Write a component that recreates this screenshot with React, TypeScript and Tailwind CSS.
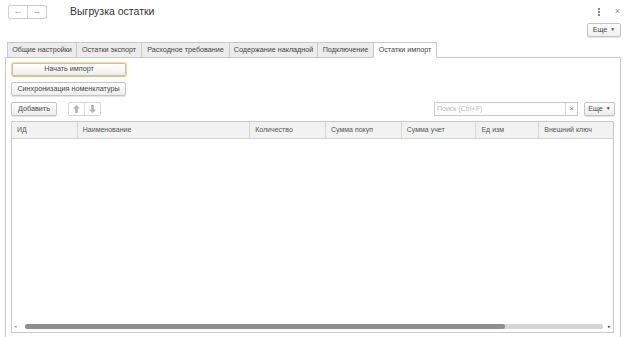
const tabs = [
  { label: "Общие настройки", w: 69 },
  { label: "Остатки экспорт", w: 65 },
  { label: "Расходное требование", w: 88 },
  { label: "Содержание накладной", w: 88 },
  { label: "Подключение", w: 56 },
  { label: "Остатки импорт", w: 64, active: true },
];

const columns = [
  { label: "ИД", w: 66 },
  { label: "Наименование", w: 173 },
  { label: "Количество", w: 76 },
  { label: "Сумма покуп", w: 76 },
  { label: "Сумма учет", w: 75 },
  { label: "Ед изм", w: 63 },
  { label: "Внешний ключ", w: 74 },
];

const Btn = ({ children, className = "" }: { children: React.ReactNode; className?: string }) => (
  <div
    className={
      "flex items-center justify-center whitespace-nowrap rounded-[2px] border border-[#c4c4c4] bg-gradient-to-b from-white to-[#ededed] text-[7.2px] text-[#4a4a4a] shadow-[0_1px_1px_rgba(0,0,0,0.12)] " +
      className
    }
  >
    {children}
  </div>
);

// filled block arrow, like the 1C up/down buttons
const BlockArrow = ({ down = false }: { down?: boolean }) => (
  <svg width="7" height="8" viewBox="0 0 7 8" className={down ? "rotate-180" : ""}>
    <path d="M3.5 0 L7 3.6 H4.8 V8 H2.2 V3.6 H0 Z" fill="#b4b4b4" />
  </svg>
);

export default function App() {
  return (
    <div className="relative h-[337px] w-[627px] overflow-hidden bg-white font-['Liberation_Sans',Arial,sans-serif] text-[#333]">
      {/* header */}
      <div className="flex h-[22px] items-center pl-[8px] pr-[7px] pt-[1px]">
        <div className="flex h-[14px] w-[39px] items-center rounded-[2px] border border-[#cfcfcf] bg-white text-[9px] text-[#9a9a9a]">
          <span className="flex flex-1 justify-center">←</span>
          <span className="h-full w-px bg-[#d8d8d8]" />
          <span className="flex flex-1 justify-center">→</span>
        </div>
        <div className="ml-[23px] whitespace-nowrap text-[10.5px] text-[#333]">Выгрузка остатки</div>
        <div className="ml-auto flex items-center gap-[15px] text-[#8a8a8a]">
          <span className="flex flex-col gap-[1px]">
            <span className="h-[2px] w-[2px] bg-[#8a8a8a]" />
            <span className="h-[2px] w-[2px] bg-[#8a8a8a]" />
            <span className="h-[2px] w-[2px] bg-[#8a8a8a]" />
          </span>
          <span className="text-[9px] leading-none">×</span>
        </div>
      </div>
      <div className="flex justify-end pr-[6px] pt-[1px]">
        <Btn className="h-[14px] w-[34px] gap-[3px]">
          Еще <span className="text-[5px]">▼</span>
        </Btn>
      </div>

      {/* tabs */}
      <div className="mt-[5px] flex pl-[7px]">
        {tabs.map((t) => (
          <div
            key={t.label}
            style={{ width: t.w }}
            className={
              "flex h-[16px] items-center justify-center whitespace-nowrap border border-r-0 border-[#c9c9c9] text-[7.2px] text-[#444] last:border-r " +
              (t.active ? "border-b-white bg-white" : "bg-[#ececec]")
            }
          >
            {t.label}
          </div>
        ))}
      </div>
      <div className="-mt-px ml-[5px] mr-[6px] h-[300px] border border-[#c9c9c9] px-[5px] pt-[4px]">
        <div className="flex flex-col gap-[5px]">
          <div className="w-fit rounded-[2px] border border-[#f7dc74] p-0">
            <Btn className="h-[13px] w-[114px]">Начать импорт</Btn>
          </div>
          <Btn className="h-[14px] w-[115px]">Синхронизация номенклатуры</Btn>
        </div>

        <div className="mt-[6px] flex items-center">
          <Btn className="h-[14px] w-[46px]">Добавить</Btn>
          <div className="ml-[11px] flex h-[14px] w-[33px] items-center rounded-[2px] border border-[#d6d6d6]">
            <span className="flex flex-1 justify-center">
              <BlockArrow />
            </span>
            <span className="h-full w-px bg-[#e0e0e0]" />
            <span className="flex flex-1 justify-center">
              <BlockArrow down />
            </span>
          </div>
          <div className="ml-auto flex h-[14px] w-[144px] items-center border border-[#c9c9c9] bg-white">
            <span className="flex-1 whitespace-nowrap pl-[2px] text-[7px] text-[#b8b8b8]">Поиск (Ctrl+F)</span>
            <span className="flex h-full w-[12px] items-center justify-center border-l border-[#d6d6d6] text-[8px] text-[#777]">×</span>
          </div>
          <Btn className="ml-[6px] h-[14px] w-[31px] gap-[3px]">
            Еще <span className="text-[5px]">▼</span>
          </Btn>
        </div>

        {/* table */}
        <div className="mt-[5px] flex h-[212px] w-[603px] flex-col border border-[#c9c9c9]">
          <div className="flex h-[17px] border-b border-[#d4d4d4] bg-[#f2f2f2]">
            {columns.map((c, i) => (
              <div
                key={c.label}
                style={{ width: c.w }}
                className={
                  "flex items-center whitespace-nowrap pl-[5px] text-[7px] text-[#555] " +
                  (i < columns.length - 1 ? "border-r border-[#d8d8d8]" : "")
                }
              >
                {c.label}
              </div>
            ))}
          </div>
          <div className="flex-1" />
          <div className="flex h-[8px] items-center px-[2px] pb-[3px]">
            <span className="text-[5px] text-[#999]">◂</span>
            <div className="ml-[8px] flex h-[5px] flex-1 rounded-full bg-[#d6d6d6]">
              <div className="h-full w-[83%] rounded-full bg-[#8e8e8e]" />
            </div>
            <span className="ml-[5px] text-[5px] text-[#444]">▸</span>
          </div>
        </div>
      </div>
    </div>
  );
}
